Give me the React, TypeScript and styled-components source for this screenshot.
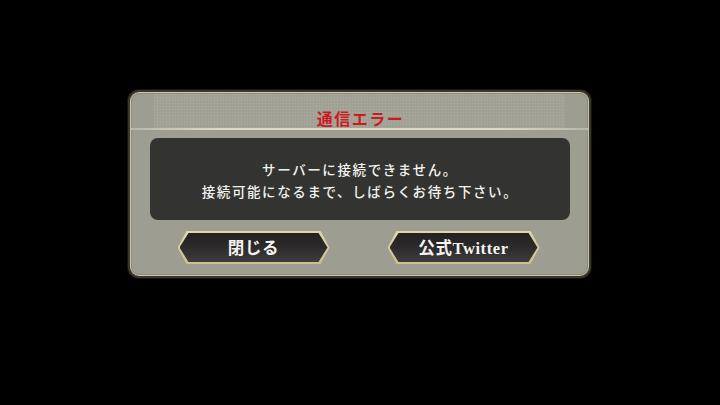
import React from "react";
import styled, { createGlobalStyle } from "styled-components";

const Global = createGlobalStyle`
  html, body { margin: 0; padding: 0; background: #000; }
  body { width: 720px; height: 405px; overflow: hidden; }
`;

const Screen = styled.div`
  width: 720px;
  height: 405px;
  background: #000;
  display: flex;
  justify-content: center;
  align-items: flex-start;
  padding-top: 90px;
  box-sizing: border-box;
`;

const Dialog = styled.div`
  width: 463px;
  height: 188px;
  box-sizing: border-box;
  margin-left: -1px;
  border: 2px solid #3b3829;
  border-radius: 11px;
  background: #9e9d91;
  box-shadow: inset 0 0 0 1px #c9c6b2, inset 0 0 0 2px #8c8a7d, 0 0 0 1px #15140f;
  display: flex;
  flex-direction: column;
  align-items: stretch;
  padding: 2px 0 0;
`;

const Header = styled.div`
  height: 34px;
  margin: 0 24px;
  display: flex;
  align-items: flex-end;
  justify-content: center;
  background-color: #a09f93;
  background-image:
    repeating-linear-gradient(90deg, rgba(255,255,255,0.05) 0 1px, transparent 1px 3px),
    repeating-linear-gradient(0deg, rgba(255,255,255,0.05) 0 1px, transparent 1px 3px);
`;

const Title = styled.div`
  font-family: "Noto Sans CJK JP", sans-serif;
  font-weight: 700;
  font-size: 16px;
  line-height: 16px;
  letter-spacing: 1.5px;
  color: #cc1b1f;
  margin-left: 2px;
  margin-bottom: 2px;
`;

const Rule = styled.div`
  height: 2px;
  margin: 0 1px;
  background: linear-gradient(90deg, #b9b7a6, #dddbc8 20%, #dddbc8 80%, #b9b7a6);
`;

const Panel = styled.div`
  margin: 8px 19px 0 20px;
  height: 82px;
  border-radius: 8px;
  background: #333331;
  display: flex;
  flex-direction: column;
  align-items: center;
  justify-content: center;
  padding-top: 2px;
  box-sizing: border-box;
`;

const Line = styled.div`
  font-family: "Noto Sans CJK JP", sans-serif;
  font-weight: 500;
  font-size: 13.5px;
  line-height: 22px;
  letter-spacing: 1.6px;
  color: #f2f2ee;
  white-space: nowrap;
`;

const Buttons = styled.div`
  margin-top: 11px;
  display: flex;
  justify-content: center;
  gap: 58px;
  padding-right: 2px;
`;

const hex = "polygon(9px 0, calc(100% - 9px) 0, 100% 50%, calc(100% - 9px) 100%, 9px 100%, 0 50%)";

const ButtonOuter = styled.button`
  width: 152px;
  height: 33px;
  border: none;
  padding: 2px 2px;
  background: linear-gradient(180deg, #e0d9a8, #c9c08a);
  clip-path: ${hex};
  cursor: pointer;
  display: flex;
`;

const ButtonInner = styled.span`
  flex: 1;
  clip-path: ${hex};
  background: linear-gradient(180deg, #232121 0%, #2b2929 45%, #3d3b3b 100%);
  display: flex;
  align-items: center;
  justify-content: center;
  font-family: "Liberation Serif", "Noto Sans CJK JP", serif;
  font-weight: 700;
  font-size: 16.5px;
  letter-spacing: 0.6px;
  color: #f4f4f0;
  padding-bottom: 2px;
`;

const Button: React.FC<{ label: string }> = ({ label }) => (
  <ButtonOuter>
    <ButtonInner>{label}</ButtonInner>
  </ButtonOuter>
);

export default function App() {
  return (
    <>
      <Global />
      <Screen>
        <Dialog>
          <Header>
            <Title>通信エラー</Title>
          </Header>
          <Rule />
          <Panel>
            <Line>サーバーに接続できません。</Line>
            <Line>接続可能になるまで、しばらくお待ち下さい。</Line>
          </Panel>
          <Buttons>
            <Button label="閉じる" />
            <Button label="公式Twitter" />
          </Buttons>
        </Dialog>
      </Screen>
    </>
  );
}
